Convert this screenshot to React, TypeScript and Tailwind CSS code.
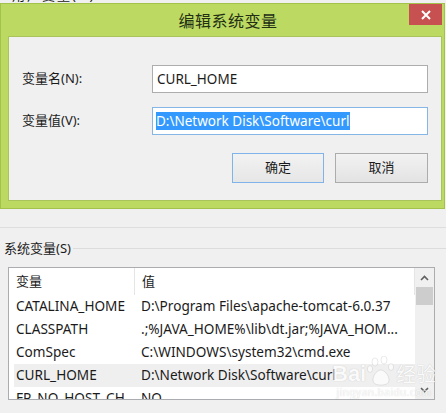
import React from "react";

const rows = [
  { name: "CATALINA_HOME", value: "D:\\Program Files\\apache-tomcat-6.0.37" },
  { name: "CLASSPATH", value: ".;%JAVA_HOME%\\lib\\dt.jar;%JAVA_HOM..." },
  { name: "ComSpec", value: "C:\\WINDOWS\\system32\\cmd.exe" },
  { name: "CURL_HOME", value: "D:\\Network Disk\\Software\\curl", selected: true },
  { name: "FP_NO_HOST_CH", value: "NO" },
];

export default function App() {
  return (
    <div className="relative w-[446px] h-[413px] overflow-hidden bg-[#f0f0f0] text-[13px] text-[#1b1b1b] font-['Noto_Sans','Noto_Sans_CJK_SC',sans-serif]">
      {/* cut-off label of the window behind */}
      <div className="h-[3px] overflow-hidden flex items-end pl-[12px]">
        <span className="leading-[15px] whitespace-nowrap tracking-[2px]">用户变量(U)</span>
      </div>

      {/* dialog */}
      <div className="w-[445px] h-[206px] bg-[#bcd962] border border-[#a3c24c] flex flex-col pl-[7px] pr-[2px] pb-[7px]">
        <div className="relative h-[32px] flex items-center justify-center">
          <span className="text-[16px] text-[#232f14] tracking-[0.5px] pl-[6px] font-['Noto_Sans_CJK_SC',sans-serif]">编辑系统变量</span>
          <div className="absolute top-0 right-0 w-[33px] h-[21px] bg-[#c75050] flex items-center justify-center">
            <svg width="10" height="10" viewBox="0 0 10 10">
              <path d="M1 1L9 9M9 1L1 9" stroke="#fff" strokeWidth="2" />
            </svg>
          </div>
        </div>

        <div className="flex-1 bg-[#f0f0f0] border border-[#a8c45a] flex flex-col">
          <div className="mt-[28px] flex items-center">
            <div className="w-[143px] pl-[13px]">变量名(N):</div>
            <div className="w-[276px] h-[28px] bg-white border border-[#adadad] flex items-center pl-[4px] text-[13.5px]">
              CURL_HOME
            </div>
          </div>
          <div className="mt-[14px] flex items-center">
            <div className="w-[143px] pl-[13px]">变量值(V):</div>
            <div className="w-[276px] h-[28px] bg-white border border-[#86b6e6] flex items-center pl-[3px] text-[13.5px]">
              <span className="bg-[#3399ff] text-white leading-[18px] pr-[1px]">D:\Network Disk\Software\curl</span>
            </div>
          </div>
          <div className="mt-[18px] flex justify-end gap-[11px] pr-[13px]">
            <button className="w-[92px] h-[30px] border border-[#7eb4ea] bg-linear-to-b from-[#f2f2f2] to-[#e6e6e6]">
              确定
            </button>
            <button className="w-[93px] h-[30px] border border-[#acacac] bg-linear-to-b from-[#f2f2f2] to-[#e3e3e3]">
              取消
            </button>
          </div>
        </div>
      </div>

      <div className="mt-[18px] h-px bg-[#dedede]" />

      {/* group box */}
      <div className="mt-[12px] flex items-center">
        <span className="pl-[4px] leading-[16px]">系统变量(S)</span>
        <div className="flex-1 h-px bg-[#dcdcdc] ml-[2px]" />
      </div>

      <div className="mt-[11px] ml-[8px] w-[427px] h-[133px] border border-[#aaacb0] bg-white flex">
        <div className="flex-1 flex flex-col overflow-hidden">
          <div className="h-[27px] flex shrink-0">
            <div className="w-[126px] h-full border-r border-[#e5e5e5] pl-[7px] flex items-center">变量</div>
            <div className="flex-1 h-full border-r border-[#e5e5e5] pl-[7px] flex items-center">值</div>
          </div>
          {rows.map((r) => (
            <div
              key={r.name}
              className={
                "ml-[5px] h-[23px] shrink-0 flex items-center whitespace-nowrap text-[13.6px] " +
                (r.selected ? "bg-[#efefef]" : "")
              }
            >
              <div className="w-[127px] pl-[2px] overflow-hidden">{r.name}</div>
              <div className="flex-1 overflow-hidden">{r.value}</div>
            </div>
          ))}
        </div>

        {/* scrollbar */}
        <div className="w-[19px] bg-[#f0f0f0] flex flex-col items-center">
          <div className="h-[19px] flex items-center justify-center">
            <svg width="9" height="6" viewBox="0 0 9 6">
              <path d="M1 5L4.5 1.5L8 5" stroke="#606060" strokeWidth="1.6" fill="none" />
            </svg>
          </div>
          <div className="w-[17px] h-[18px] bg-[#cdcdcd]" />
          <div className="flex-1" />
          <div className="h-[19px] flex items-center justify-center">
            <svg width="9" height="6" viewBox="0 0 9 6">
              <path d="M1 1L4.5 4.5L8 1" stroke="#606060" strokeWidth="1.6" fill="none" />
            </svg>
          </div>
        </div>
      </div>

      {/* watermark */}
      <div className="absolute left-[332px] top-[356px] flex flex-col items-center text-white opacity-70 [text-shadow:0_0_1px_rgba(0,0,0,0.3)] pointer-events-none">
        <div className="flex items-end">
          <span className="text-[22px] font-bold leading-[24px] font-['Liberation_Sans',sans-serif]">Bai</span>
          <svg width="28" height="30" viewBox="0 0 28 30" className="mx-[1px]">
            <g fill="#fff" stroke="rgba(0,0,0,0.15)" strokeWidth="0.8">
              <ellipse cx="8" cy="6" rx="3" ry="4" />
              <ellipse cx="17" cy="4" rx="3" ry="4" />
              <ellipse cx="24" cy="11" rx="2.6" ry="3.4" />
              <ellipse cx="3" cy="13" rx="2.6" ry="3.4" />
              <path d="M6 24c0-6 5-10 8-10s8 5 8 10c0 4-4 5-8 5s-8-1-8-5z" />
            </g>
          </svg>
          <span className="text-[20px] leading-[24px] font-['Noto_Sans_CJK_SC',sans-serif]">经验</span>
        </div>
        <span className="text-[10px] leading-[12px] tracking-[0.5px]">jingyan.baidu.com</span>
      </div>
    </div>
  );
}
